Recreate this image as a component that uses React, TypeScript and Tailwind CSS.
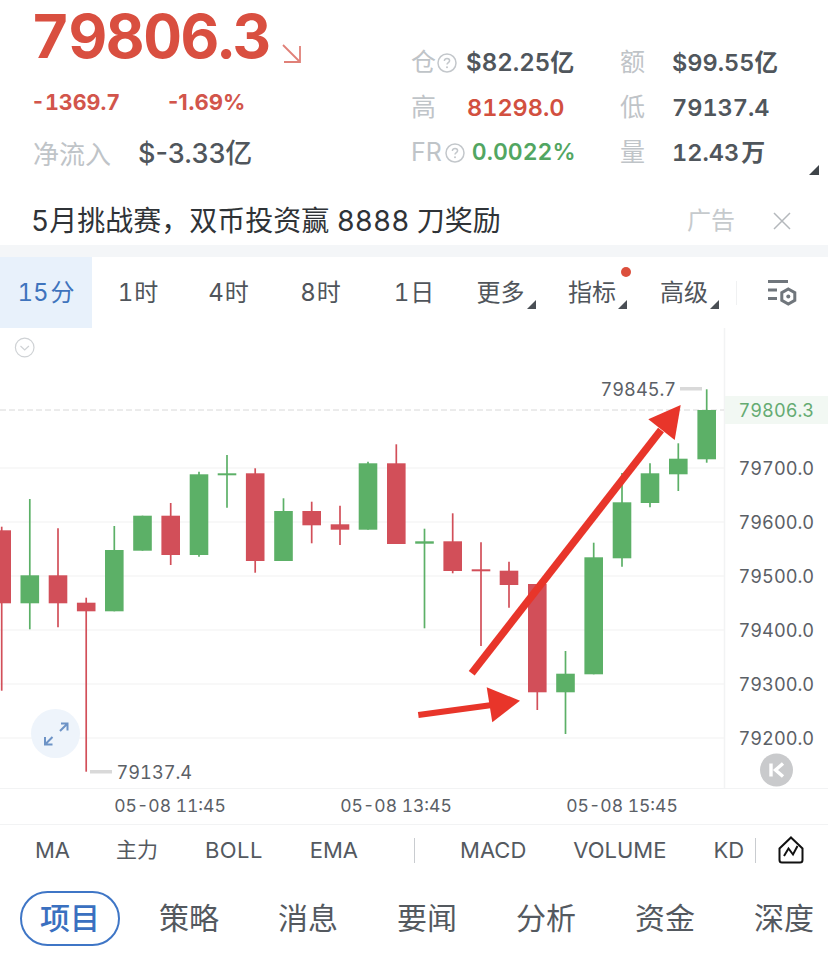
import React from "react";

type C = { x: number; t: number; b: number; wt: number; wb: number; g: boolean };
const raw: [number, number, number, number, number, boolean][] = [
  [1.7, 530.3, 603.3, 526.7, 690.7, false],
  [29.8, 575.3, 603.3, 499, 629.3, true],
  [58, 575.3, 603.3, 528.3, 627.3, false],
  [86.2, 602.7, 611.3, 597.7, 771.7, false],
  [114.3, 550, 611.3, 526, 611.3, true],
  [142.5, 515.7, 550.7, 515.7, 550.7, true],
  [170.7, 515.7, 555, 503, 565, false],
  [199, 474.3, 555, 471.7, 556.7, true],
  [227, 473.3, 475.3, 455, 507.7, true],
  [255.2, 473.3, 561, 468.3, 572.7, false],
  [283.5, 511, 561, 498.3, 561, true],
  [311.7, 511, 525.3, 501.7, 543.3, false],
  [340, 524.3, 529.7, 505.7, 545, false],
  [368, 463.3, 529.7, 461.7, 529.7, true],
  [396.3, 463.3, 544, 444.3, 544, false],
  [424.5, 541.3, 543.7, 528.7, 628.3, true],
  [452.7, 541.3, 571, 513.3, 573.3, false],
  [481, 569.3, 571.3, 542.3, 646, false],
  [509, 570.7, 585, 561.7, 607.7, false],
  [537.3, 584, 692.3, 584, 710, false],
  [565.5, 673.7, 692.3, 651, 734, true],
  [593.7, 557.3, 674.3, 542.7, 674.3, true],
  [622, 502.3, 558.3, 473, 566.7, true],
  [650, 473.3, 503, 463.3, 507.3, true],
  [678.3, 458.7, 474.3, 443.3, 491, true],
  [706.7, 410, 459.3, 389.3, 462.7, true],
];
const candles: C[] = raw.map(([x, t, b, wt, wb, g]) => ({ x, t, b, wt, wb, g }));

const axis: [string, number][] = [
  ["79700.0", 468],
  ["79600.0", 522],
  ["79500.0", 576],
  ["79400.0", 630],
  ["79300.0", 684],
  ["79200.0", 738],
];

function Help() {
  return (
    <svg width="20" height="20" viewBox="0 0 20 20" className="shrink-0">
      <circle cx="10" cy="10" r="9" fill="none" stroke="#c3c7cb" strokeWidth="1.5" />
      <path d="M7.4 8c0-1.6 1.2-2.5 2.6-2.5s2.6.9 2.6 2.3c0 1.9-2.6 1.9-2.6 3.8" fill="none" stroke="#c3c7cb" strokeWidth="1.5" />
      <circle cx="10" cy="14.2" r="1" fill="#c3c7cb" />
    </svg>
  );
}

function Corner() {
  return (
    <svg width="9" height="9" viewBox="0 0 9 9" className="absolute right-[-11px] bottom-[2px]">
      <path d="M9 0V9H0Z" fill="#4a4f55" />
    </svg>
  );
}

function Tab({ num, unit, shift }: { num: string; unit: string; shift?: boolean }) {
  return (
    <div className={shift ? "w-[92px] pr-[3px] flex items-center justify-center gap-[1px]" : "w-[92px] flex items-center justify-center gap-[1px]"}>
      <span>{num}</span>
      <span>{unit}</span>
    </div>
  );
}

function Chart() {
  return (
    <svg width="828" height="460" viewBox="0 328 828 460" className="block tabular-nums">
      {axis.map(([, y]) => (
        <line key={y} x1="0" x2="724" y1={y} y2={y} stroke="#f6f6f6" strokeWidth="1.5" />
      ))}
      <line x1="724.5" x2="724.5" y1="328" y2="788" stroke="#f2f3f4" strokeWidth="1.5" />
      <rect x="725" y="396" width="103" height="28" fill="#f2f8f3" />
      <line x1="0" x2="724" y1="410" y2="410" stroke="#d8d8d8" strokeWidth="1" strokeDasharray="6 3" />
      {candles.map((c) => {
        const col = c.g ? "#5cb067" : "#d24f59";
        return (
          <g key={c.x}>
            <line x1={c.x} x2={c.x} y1={c.wt} y2={c.wb} stroke={col} strokeWidth="1.7" />
            <rect x={c.x - 9.3} y={c.t} width="18.6" height={c.b - c.t} fill={col} />
          </g>
        );
      })}
      <rect x="680" y="387" width="22" height="3.5" fill="#d9d9d9" />
      <rect x="90" y="770" width="22" height="3.5" fill="#d9d9d9" />
      <g fontSize="18.2" fill="#5b6066">
        <text x="600.5" y="396">79845.7</text>
        <text x="116.500" y="779">79137.4</text>
        <text x="738.500" y="417" fill="#65ab72">79806.3</text>
        {axis.map(([t, y]) => (
          <text key={t} x="738.500" y={y + 6.5}>{t}</text>
        ))}
      </g>
      {/* big arrow */}
      <path d="M471.7 673.3L661 430" stroke="#e8352a" strokeWidth="7.5" fill="none" />
      <path d="M680.7 405L648.3 419.3L674.7 440Z" fill="#e8352a" />
      {/* small arrow */}
      <path d="M418.3 715L492 705" stroke="#e8352a" strokeWidth="6" fill="none" />
      <path d="M520 700.7L486.7 687.3L492.3 722.3Z" fill="#e8352a" />
      {/* collapse circle */}
      <circle cx="24.7" cy="347.5" r="9.3" fill="none" stroke="#cfd2d5" strokeWidth="1.2" />
      <path d="M20.5 346l4.2 4 4.2-4" fill="none" stroke="#cfd2d5" strokeWidth="1.2" />
      {/* expand */}
      <circle cx="55.5" cy="733.5" r="24.5" fill="#eef4fb" />
      <g fill="none" stroke="#6d93c6" strokeWidth="2">
        <path d="M61 723.5h6.5v7M67.3 723.7L60 731" />
        <path d="M45 737v7.5h7.5M45.3 744.3L52.5 737" />
      </g>
      {/* K button */}
      <circle cx="776.5" cy="770" r="16.5" fill="#c9cacc" />
      <path d="M771 763.5v13" stroke="#fff" strokeWidth="3.4" />
      <path d="M783 763.5L775.5 770L783 776.5" stroke="#fff" strokeWidth="3.4" fill="none" />
    </svg>
  );
}

export default function App() {
  return (
    <div className="w-[828px] h-[968px] overflow-hidden bg-white font-['Inter','Noto_Sans_CJK_SC',sans-serif] tabular-nums">
      {/* summary */}
      <div className="h-[196px] flex">
        <div className="w-[411px] pl-[33px] flex flex-col">
          <div className="h-[72px] flex items-center">
            <span className="ml-[-2px] text-[60px] leading-[72px] font-bold text-[#d94f40] tracking-[-1.4px]">79806.3</span>
            <svg width="22" height="22" viewBox="0 0 22 22" className="ml-[11px] mt-[36px]">
              <path d="M2 2L19 19M19 3V19H3" fill="none" stroke="#e08078" strokeWidth="1.8" />
            </svg>
          </div>
          <div className="mt-[16px] h-[28px] flex items-center text-[21.5px] font-bold text-[#d2554b]">
            <span className="ml-[-2px] w-[137px]">-1369.7</span>
            <span className="text-[22px] [font-variant-numeric:normal]">-1.69%</span>
          </div>
          <div className="mt-[18px] h-[40px] flex items-center">
            <span className="w-[105px] text-[26px] text-[#bfc4c8]">净流入</span>
            <span className="text-[27px] font-medium text-[#50565c] [font-variant-numeric:normal]">$-3.33亿</span>
          </div>
        </div>
        <div className="flex-1 relative pt-[40px] grid grid-cols-[56px_153px_52px_1fr] grid-rows-[45px_45px_45px] items-center content-start text-[23.5px] text-[#50565c] font-semibold">
          <span className="col-span-2 flex items-center font-normal text-[25px] text-[#bfc4c8]">
            仓<span className="ml-[1px]"><Help /></span>
            <span className="ml-[9px] font-semibold text-[24px] text-[#50565c]">$82.25亿</span>
          </span>
          <span className="font-normal text-[25px] text-[#bfc4c8]">额</span>
          <span>$99.55亿</span>
          <span className="font-normal text-[25px] text-[#bfc4c8]">高</span>
          <span className="text-[#d2503f]">81298.0</span>
          <span className="font-normal text-[25px] text-[#bfc4c8]">低</span>
          <span>79137.4</span>
          <span className="col-span-2 flex items-center font-normal text-[25px] text-[#bfc4c8]">
            FR<span className="ml-[3px]"><Help /></span>
            <span className="ml-[7px] font-semibold text-[23px] text-[#52a662]">0.0022%</span>
          </span>
          <span className="font-normal text-[25px] text-[#bfc4c8]">量</span>
          <span className="flex items-center gap-[2px]">
            <span>12.43</span>
            <span className="text-[24px]">万</span>
          </span>
          <svg width="10" height="10" viewBox="0 0 10 10" className="absolute right-[9px] bottom-[21px]">
            <path d="M10 0V10H0Z" fill="#3f4449" />
          </svg>
        </div>
      </div>
      {/* banner */}
      <div className="h-[49px] pl-[31px] pr-[37px] flex items-center justify-between">
        <span className="text-[28px] text-[#2f3337]">5月挑战赛，双币投资赢 8888 刀奖励</span>
        <div className="flex items-center gap-[38px]">
          <span className="text-[24px] text-[#c6cacd]">广告</span>
          <svg width="18" height="18" viewBox="0 0 18 18">
            <path d="M1 1L17 17M17 1L1 17" stroke="#b4b8bc" strokeWidth="1.5" />
          </svg>
        </div>
      </div>
      <div className="h-[12px] bg-[#f4f6f8]" />
      {/* period tabs */}
      <div className="h-[71px] flex text-[24px] text-[#50555b]">
        <div className="w-[92px] flex items-center justify-center gap-[2px] bg-[#e8f1fb] text-[#3f74bd]">
          <span>15</span>
          <span>分</span>
        </div>
        <Tab num="1" unit="时" />
        <Tab num="4" unit="时" shift />
        <Tab num="8" unit="时" shift />
        <Tab num="1" unit="日" />
        <div className="w-[81px] flex items-center justify-center">
          <span className="relative">更多<Corner /></span>
        </div>
        <div className="w-[102px] flex items-center justify-center">
          <span className="relative">
            指标
            <Corner />
            <span className="absolute right-[-15px] top-[-8px] w-[10px] h-[10px] rounded-full bg-[#dc4f3c]" />
          </span>
        </div>
        <div className="w-[82px] flex items-center justify-center">
          <span className="relative">高级<Corner /></span>
        </div>
        <div className="flex items-center flex-1">
          <span className="ml-[11px] w-px h-[24px] bg-[#f0f1f2]" />
          <svg width="30" height="26" viewBox="0 0 30 26" className="ml-[31px]">
            <g fill="#70767c">
              <rect x="0" y="0" width="20" height="3" />
              <rect x="0" y="8.500" width="9" height="3" />
              <rect x="0" y="17" width="9" height="3" />
            </g>
            <path d="M20.300 9l6.500 3.700v7.600l-6.500 3.700-6.500-3.700v-7.600z" fill="none" stroke="#70767c" strokeWidth="3" />
            <circle cx="20.300" cy="16.500" r="2" fill="#70767c" />
          </svg>
        </div>
      </div>
      <Chart />
      {/* time axis */}
      <div className="h-[36px] border-t-[1.5px] border-[#f2f3f4] pl-[57px] flex items-center text-[17.5px] text-[#5b6066]">
        <span className="w-[226px] text-center">05-08 11:45</span>
        <span className="w-[226px] text-center">05-08 13:45</span>
        <span className="w-[226px] text-center">05-08 15:45</span>
      </div>
      {/* indicators */}
      <div className="h-[53px] border-t-[1.5px] border-[#f2f3f4] pl-[35px] pb-[2px] flex items-center gap-[47px] text-[22px] text-[#54595f]">
        <span>MA</span>
        <span className="ml-[-1px] text-[21px]">主力</span>
        <span className="tracking-[0.4px]">BOLL</span>
        <span>EMA</span>
        <span className="ml-[9px] w-px h-[25px] bg-[#c9ccd0]" />
        <span className="ml-[-2px]">MACD</span>
        <span>VOLUME</span>
        <span>KD</span>
        <span className="ml-[-36px] w-px h-[25px] bg-[#c9ccd0]" />
        <svg width="26" height="28" viewBox="0 0 26 28" className="ml-[-25px]">
          <path d="M13 1.500L24.500 12.500V24a2.500 2.500 0 0 1-2.500 2.500H4A2.500 2.500 0 0 1 1.500 24V12.500z" fill="none" stroke="#111" strokeWidth="2" />
          <path d="M6 20L10.500 12.500L15 18.500L19.500 10" fill="none" stroke="#111" strokeWidth="2" />
        </svg>
      </div>
      {/* bottom tabs */}
      <div className="h-[91px] pl-[20px] pt-[14px] flex gap-[59px] text-[30px] text-[#54595f]">
        <span className="w-[100px] h-[55px] mr-[-20px] rounded-full border-2 border-[#3f76c6] flex items-center justify-center text-[#3a70c0] font-medium">项目</span>
        {["策略", "消息", "要闻", "分析", "资金", "深度"].map((t) => (
          <span key={t} className="h-[55px] flex items-center">{t}</span>
        ))}
      </div>
    </div>
  );
}
